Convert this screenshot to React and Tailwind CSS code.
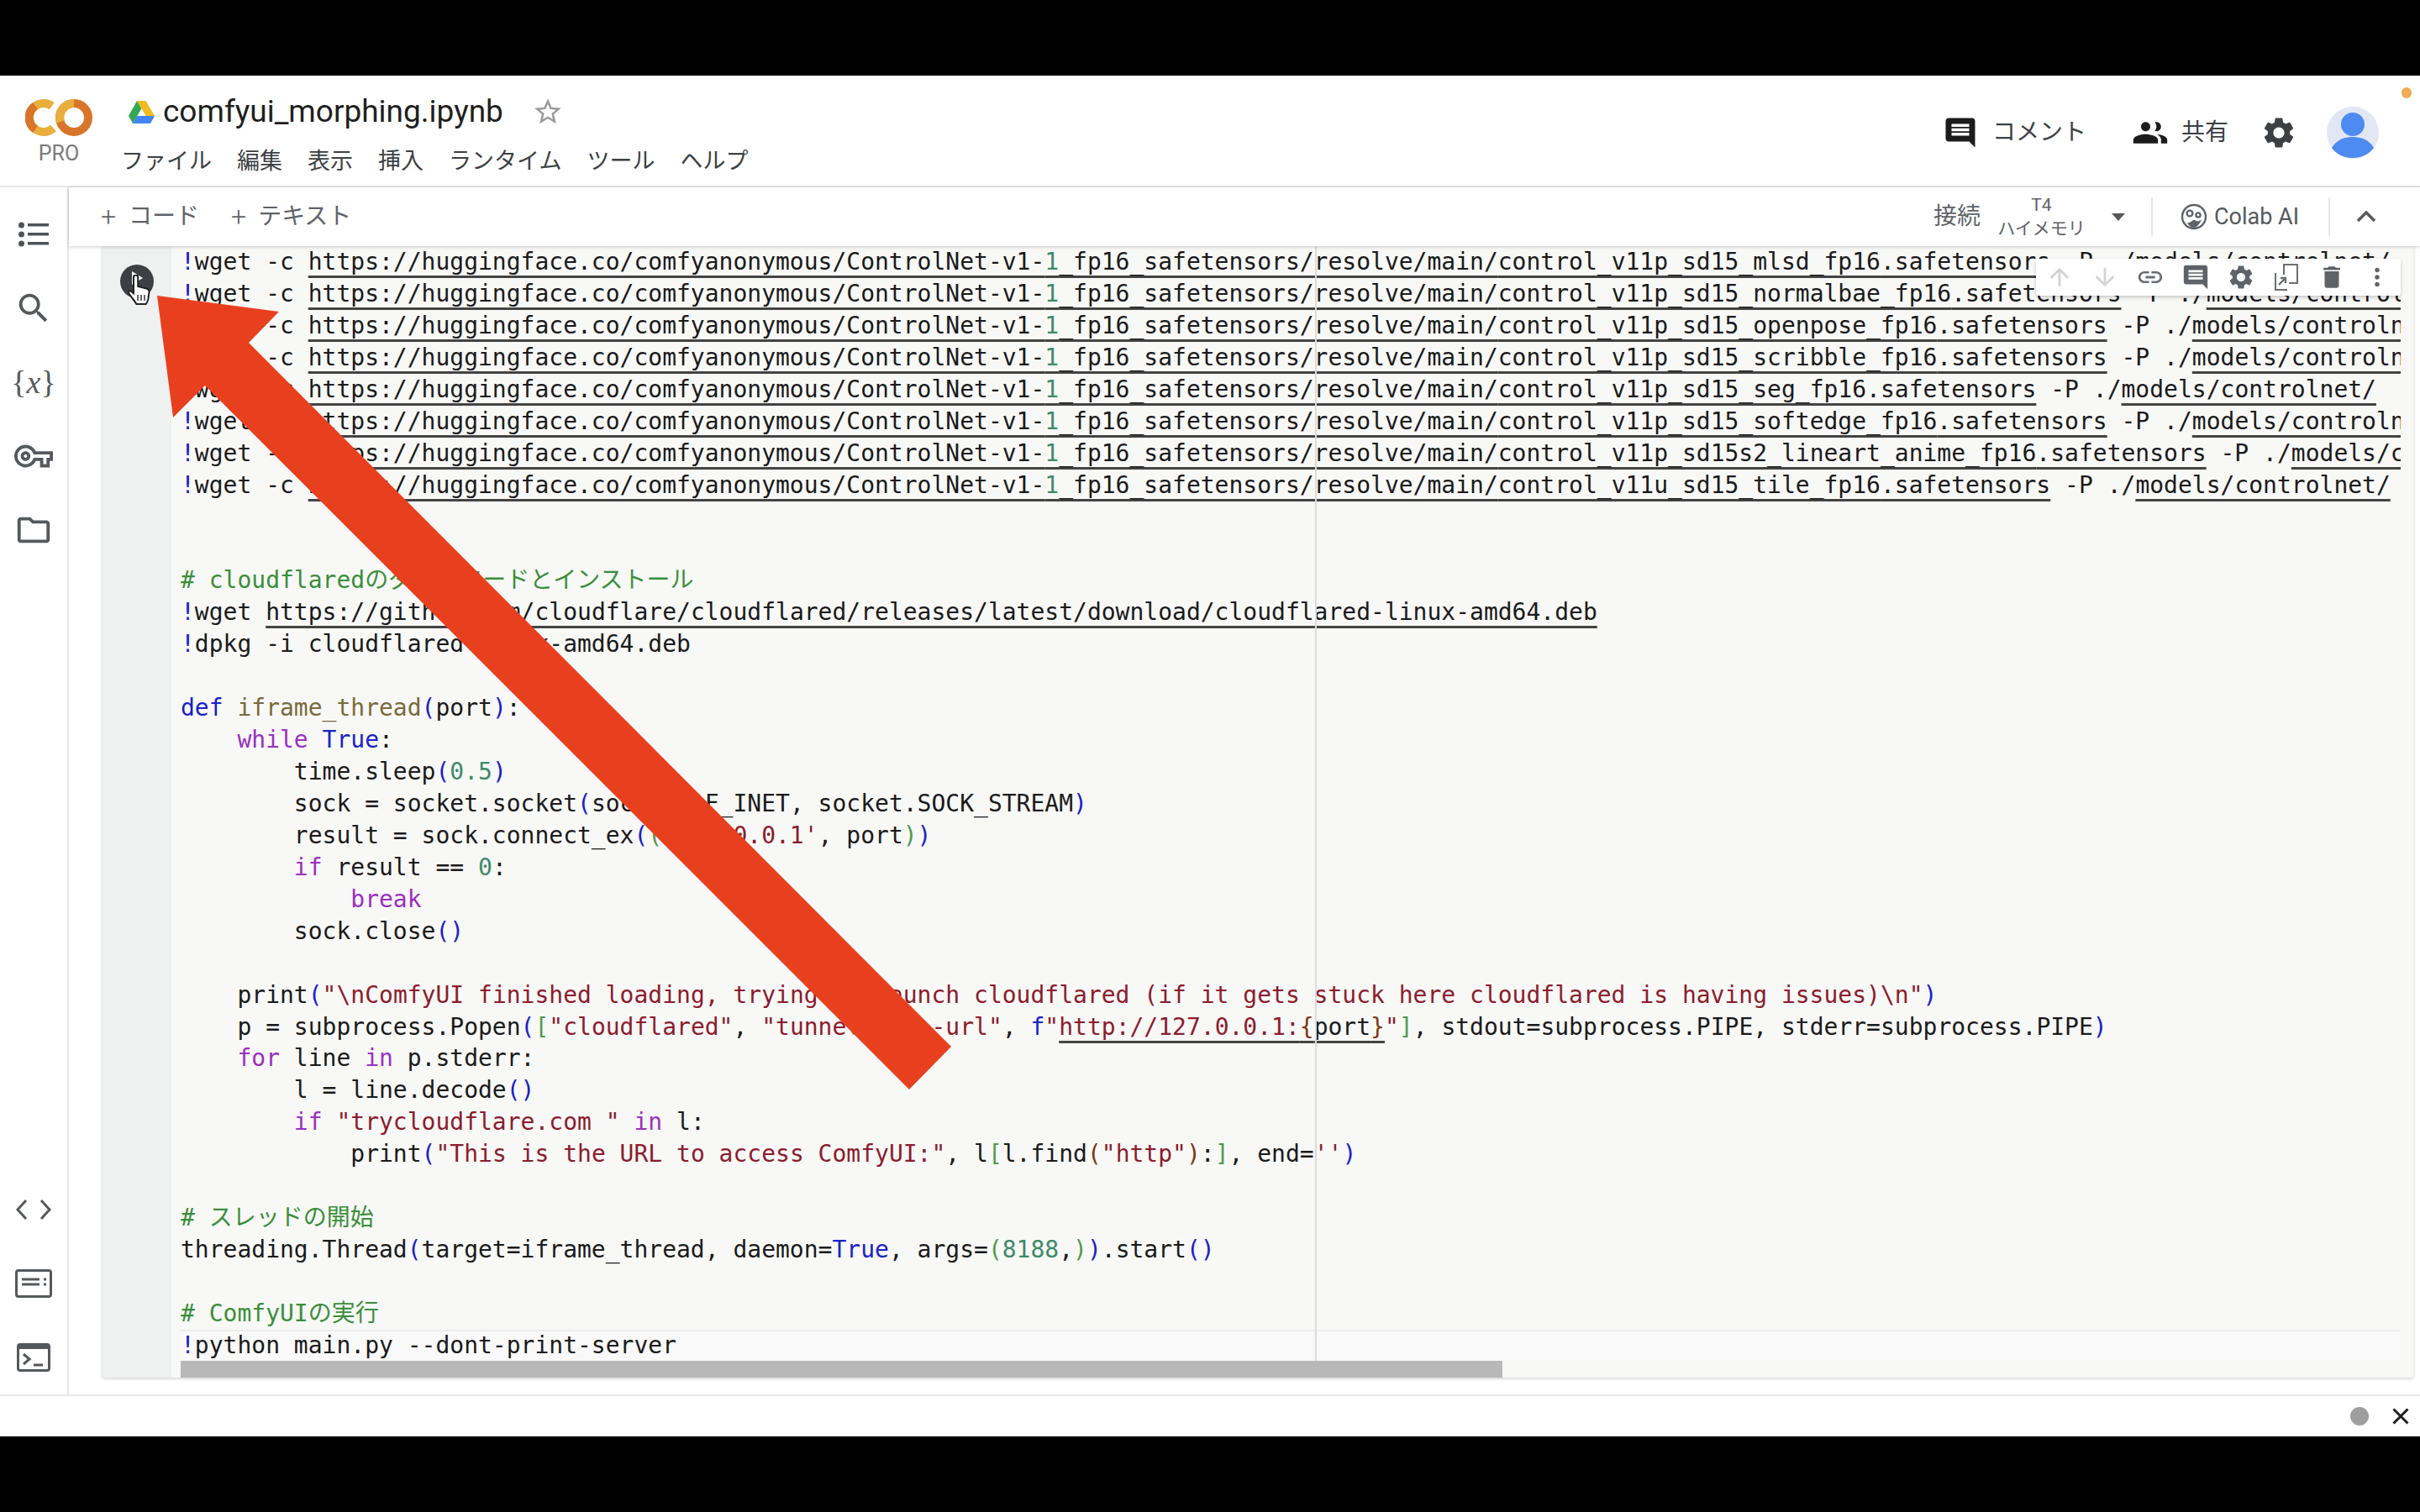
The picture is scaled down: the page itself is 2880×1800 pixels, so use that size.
import React from 'react';

const sans = "font-['Roboto','Noto_Sans_CJK_JP',sans-serif]";

// material style filled icon
function Mi({ d, size = 24, className = '' }) {
  return (
    <svg viewBox="0 0 24 24" width={size} height={size} fill="currentColor" className={className}>
      <path d={d} />
    </svg>
  );
}

const icons = {
  comment: 'M21.99 4c0-1.1-.89-2-1.99-2H4c-1.1 0-2 .9-2 2v12c0 1.1.9 2 2 2h14l4 4-.01-18zM18 14H6v-2h12v2zm0-3H6V9h12v2zm0-3H6V6h12v2z',
  people: 'M16 11c1.66 0 2.99-1.34 2.99-3S17.66 5 16 5c-.4 0-.8.08-1.15.22C15.57 5.95 16 6.93 16 8s-.43 2.05-1.15 2.78c.35.14.75.22 1.15.22zM9 11c1.66 0 3-1.34 3-3S10.66 5 9 5 6 6.34 6 8s1.34 3 3 3zm0 2c-2.33 0-8 1.17-8 3.5V19h16v-2.5C17 14.17 11.33 13 9 13zm7.5.1c1.5 1 2.5 2 2.5 3.4V19h4v-2.5c0-2.1-3.8-3.2-6.5-3.4z',
  gear: 'M19.14 12.94c.04-.3.06-.61.06-.94 0-.32-.02-.64-.07-.94l2.03-1.58c.18-.14.23-.41.12-.61l-1.92-3.32c-.12-.22-.37-.29-.59-.22l-2.39.96c-.5-.38-1.03-.7-1.62-.94l-.36-2.54c-.04-.24-.24-.41-.48-.41h-3.84c-.24 0-.43.17-.47.41l-.36 2.54c-.59.24-1.13.57-1.62.94l-2.39-.96c-.22-.08-.47 0-.59.22L2.74 8.87c-.12.21-.08.47.12.61l2.03 1.58c-.05.3-.09.63-.09.94s.02.64.07.94l-2.03 1.58c-.18.14-.23.41-.12.61l1.92 3.32c.12.22.37.29.59.22l2.39-.96c.5.38 1.03.7 1.62.94l.36 2.54c.05.24.24.41.48.41h3.84c.24 0 .44-.17.47-.41l.36-2.54c.59-.24 1.13-.56 1.62-.94l2.39.96c.22.08.47 0 .59-.22l1.92-3.32c.12-.22.07-.47-.12-.61l-2.01-1.58zM12 15.6c-1.98 0-3.6-1.62-3.6-3.6s1.62-3.6 3.6-3.6 3.6 1.62 3.6 3.6-1.62 3.6-3.6 3.6z',
  link: 'M3.9 12c0-1.71 1.39-3.1 3.1-3.1h4V7H7c-2.76 0-5 2.24-5 5s2.24 5 5 5h4v-1.9H7c-1.71 0-3.1-1.39-3.1-3.1zM8 13h8v-2H8v2zm9-6h-4v1.9h4c1.71 0 3.1 1.39 3.1 3.1s-1.39 3.1-3.1 3.1h-4V17h4c2.76 0 5-2.24 5-5s-2.24-5-5-5z',
  trash: 'M6 19c0 1.1.9 2 2 2h8c1.1 0 2-.9 2-2V7H6v12zM19 4h-3.5l-1-1h-5l-1 1H5v2h14V4z',
  dots: 'M12 8c1.1 0 2-.9 2-2s-.9-2-2-2-2 .9-2 2 .9 2 2 2zm0 2c-1.1 0-2 .9-2 2s.9 2 2 2 2-.9 2-2-.9-2-2-2zm0 6c-1.1 0-2 .9-2 2s.9 2 2 2 2-.9 2-2-.9-2-2-2z',
  up: 'M4 12l1.41 1.41L11 7.83V20h2V7.83l5.58 5.59L20 12l-8-8-8 8z',
  down: 'M20 12l-1.41-1.41L13 16.17V4h-2v12.17l-5.58-5.59L4 12l8 8 8-8z',
  star: 'M22 9.24l-7.19-.62L12 2 9.19 8.63 2 9.24l5.46 4.73L5.82 21 12 17.27 18.18 21l-1.63-7.03L22 9.24zM12 15.4l-3.76 2.27 1-4.28-3.32-2.88 4.38-.38L12 6.1l1.71 4.04 4.38.38-3.32 2.88 1 4.28L12 15.4z',
  search: 'M15.5 14h-.79l-.28-.27C15.41 12.59 16 11.11 16 9.5 16 5.91 13.09 3 9.5 3S3 5.91 3 9.5 5.91 16 9.5 16c1.61 0 3.09-.59 4.23-1.57l.27.28v.79l5 4.99L20.49 19l-4.99-5zm-6 0C7.01 14 5 11.99 5 9.5S7.01 5 9.5 5 14 7.01 14 9.5 11.99 14 9.5 14z',
  key: 'M22 19h-6v-4h-2.68c-1.14 2.42-3.6 4-6.32 4-3.86 0-7-3.14-7-7s3.14-7 7-7c2.72 0 5.17 1.58 6.32 4H24v6h-2v4zm-4-2h2v-4h2v-2H11.94l-.23-.67C11.01 8.34 9.11 7 7 7c-2.76 0-5 2.24-5 5s2.24 5 5 5c2.11 0 4.01-1.34 4.71-3.33l.23-.67H18v4zM7 15c-1.65 0-3-1.35-3-3s1.35-3 3-3 3 1.35 3 3-1.35 3-3 3zm0-4c-.55 0-1 .45-1 1s.45 1 1 1 1-.45 1-1-.45-1-1-1z',
  folder: 'M9.17 6l2 2H20v10H4V6h5.17M10 4H4c-1.1 0-1.99.9-1.99 2L2 18c0 1.1.9 2 2 2h16c1.1 0 2-.9 2-2V8c0-1.1-.9-2-2-2h-8l-2-2z',
};

function ColabLogo() {
  return (
    <svg width="80" height="48" viewBox="0 0 80 48">
      <circle cx="22" cy="24" r="17" fill="none" stroke="#e9ae3c" strokeWidth="10" strokeDasharray="76 31" strokeDashoffset="-14" />
      <path d="M12 10 A17 17 0 0 0 12 38" fill="none" stroke="#d9752b" strokeWidth="10" />
      <circle cx="58" cy="24" r="17" fill="none" stroke="#d9752b" strokeWidth="10" />
      <path d="M42 29 A17 17 0 0 1 58 7" fill="none" stroke="#e9ae3c" strokeWidth="10" />
    </svg>
  );
}

function DriveIcon() {
  return (
    <svg width="31" height="27" viewBox="0 0 31 27">
      <polygon points="10,0 15.5,9 5,27 0,18" fill="#34a853" />
      <polygon points="10,0 20.5,0 31,18 20.5,18" fill="#f2bb1d" />
      <polygon points="5,27 10,18 31,18 26,27" fill="#4285f4" />
    </svg>
  );
}

function Avatar() {
  return (
    <svg width="62" height="62" viewBox="0 0 62 62">
      <circle cx="31" cy="31" r="31" fill="#e3e7f5" />
      <circle cx="31" cy="21" r="14" fill="#4d8bf0" />
      <path d="M6 49 C12 39 21 36 31 36 C41 36 50 39 56 49 C50 57 41 61 31 61 C21 61 12 57 6 49Z" fill="#4d8bf0" />
    </svg>
  );
}

function ColabAiIcon() {
  return (
    <svg width="32" height="32" viewBox="0 0 32 32" fill="none" stroke="#5f6368" strokeWidth="2.4">
      <circle cx="16" cy="16" r="14" />
      <circle cx="11" cy="12" r="3.4" />
      <circle cx="21" cy="14" r="2.6" />
      <path d="M8 23c5 1 6-4 9-3s3 3 8-1c-2 6-6 10-9 10s-6-2-8-6z" fill="#5f6368" stroke="none" />
    </svg>
  );
}

function MirrorIcon() {
  return (
    <svg width="30" height="34" viewBox="0 0 30 34" fill="none" stroke="#6b6e72" strokeWidth="2">
      <path d="M12 14V2h16v22H18" />
      <path d="M2 12v20h14" />
      <path d="M6 26l8-8M8 18h6v6" strokeWidth="2.4" />
    </svg>
  );
}

function ListIcon() {
  return (
    <svg width="36" height="32" viewBox="0 0 36 32" fill="#4f5357">
      <circle cx="3.5" cy="5" r="3.5" />
      <circle cx="3.5" cy="16" r="3.5" />
      <circle cx="3.5" cy="27" r="3.5" />
      <rect x="11" y="3" width="25" height="3.5" />
      <rect x="11" y="14" width="25" height="3.5" />
      <rect x="11" y="25" width="25" height="3.5" />
    </svg>
  );
}

function CodeIcon() {
  return (
    <svg width="42" height="26" viewBox="0 0 42 26" fill="none" stroke="#55595d" strokeWidth="3">
      <path d="M12 2L2 13l10 11M30 2l10 11-10 11" />
    </svg>
  );
}

function SnippetIcon() {
  return (
    <svg width="44" height="34" viewBox="0 0 44 34" fill="none" stroke="#55595d" strokeWidth="3">
      <rect x="1.5" y="1.5" width="41" height="31" rx="2.5" />
      <path d="M8 12h21M8 18h21M8 24h0" />
      <path d="M34 12h3M34 18h3" />
    </svg>
  );
}

function TerminalIcon() {
  return (
    <svg width="40" height="34" viewBox="0 0 40 34" fill="none" stroke="#55595d" strokeWidth="3">
      <rect x="1.5" y="1.5" width="37" height="31" rx="2.5" />
      <rect x="1" y="1" width="38" height="6" fill="#55595d" stroke="none" />
      <path d="M8 13l7 6-7 6M20 26h11" />
    </svg>
  );
}

function HandCursor() {
  return (
    <svg width="30" height="38" viewBox="0 0 30 38" className="absolute left-[9px] top-[12px]">
      <path
        d="M7 3a2.6 2.6 0 0 1 5.2 0v11l10 2.4a4 4 0 0 1 3.3 4.4l-1.2 8.4q-.5 3-2.6 5.8H10.400q-2-3.400-5-7l-4-5.600q-1.500-3 1.600-3.200l4 3z"
        fill="#fff"
        stroke="#222"
        strokeWidth="2"
      />
      <path d="M12 24v7M16 24v7M20 24v7" stroke="#444" strokeWidth="1.600" />
    </svg>
  );
}

// syntax colours
const B = ({ children }) => <span className="text-[#1a22c8]">{children}</span>;
const P = ({ children }) => <span className="text-[#9a30c0]">{children}</span>;
const S = ({ children }) => <span className="text-[#8b1c2c]">{children}</span>;
const N = ({ children }) => <span className="text-[#3d8a68]">{children}</span>;
const C = ({ children }) => <span className="text-[#3a8f3a]">{children}</span>;
const F = ({ children }) => <span className="text-[#7a6a3a]">{children}</span>;
const G = ({ children }) => <span className="text-[#4f9a4f]">{children}</span>;
const Br = ({ children }) => <span className="text-[#7b3814]">{children}</span>;
const U = ({ children }) => (
  <span className="underline decoration-[2.5px] decoration-[#444] underline-offset-[7px] [text-decoration-skip-ink:none]">{children}</span>
);
const Bang = () => <span className="text-[#1a22c8]">!</span>;

const models = [
  'mlsd_fp16',
  'normalbae_fp16',
  'openpose_fp16',
  'scribble_fp16',
  'seg_fp16',
  'softedge_fp16',
];

const Row = ({ children }) => <div className="h-[37.94px]">{children}</div>;

function WgetLine({ name }) {
  return (
    <Row>
      <Bang />wget -c <U>https://huggingface.co/comfyanonymous/ControlNet-v1-<N>1</N>_fp16_safetensors/resolve/main/{name}.safetensors</U> -P ./<U>models/controlnet/</U>
    </Row>
  );
}

function CodeLines() {
  return (
    <>
      {models.map((m) => (
        <WgetLine key={m} name={`control_v11p_sd15_${m}`} />
      ))}
      <WgetLine name="control_v11p_sd15s2_lineart_anime_fp16" />
      <WgetLine name="control_v11u_sd15_tile_fp16" />
      <Row />
      <Row />
      <Row><C># cloudflaredのダウンロードとインストール</C></Row>
      <Row><Bang />wget <U>https://github.com/cloudflare/cloudflared/releases/latest/download/cloudflared-linux-amd64.deb</U></Row>
      <Row><Bang />dpkg -i cloudflared-linux-amd64.deb</Row>
      <Row />
      <Row><B>def</B> <F>iframe_thread</F><B>(</B>port<B>)</B>:</Row>
      <Row>{'    '}<P>while</P> <B>True</B>:</Row>
      <Row>{'        '}time.sleep<B>(</B><N>0.5</N><B>)</B></Row>
      <Row>{'        '}sock = socket.socket<B>(</B>socket.AF_INET, socket.SOCK_STREAM<B>)</B></Row>
      <Row>{'        '}result = sock.connect_ex<B>(</B><G>(</G><S>'127.0.0.1'</S>, port<G>)</G><B>)</B></Row>
      <Row>{'        '}<P>if</P> result == <N>0</N>:</Row>
      <Row>{'            '}<P>break</P></Row>
      <Row>{'        '}sock.close<B>()</B></Row>
      <Row />
      <Row>{'    '}print<B>(</B><S>"\nComfyUI finished loading, trying to launch cloudflared (if it gets stuck here cloudflared is having issues)\n"</S><B>)</B></Row>
      <Row>{'    '}p = subprocess.Popen<B>(</B><G>[</G><S>"cloudflared"</S>, <S>"tunnel"</S>, <S>"--url"</S>, <B>f</B><S>"<U>http://127.0.0.1:<Br>{'{'}</Br><span className="text-[#1a1a1a]">port</span><Br>{'}'}</Br></U>"</S><G>]</G>, stdout=subprocess.PIPE, stderr=subprocess.PIPE<B>)</B></Row>
      <Row>{'    '}<P>for</P> line <P>in</P> p.stderr:</Row>
      <Row>{'        '}l = line.decode<B>()</B></Row>
      <Row>{'        '}<P>if</P> <S>"trycloudflare.com "</S> <P>in</P> l:</Row>
      <Row>{'            '}print<B>(</B><S>"This is the URL to access ComfyUI:"</S>, l<G>[</G>l.find<Br>(</Br><S>"http"</S><Br>)</Br>:<G>]</G>, end=<S>''</S><B>)</B></Row>
      <Row />
      <Row><C># スレッドの開始</C></Row>
      <Row>threading.Thread<B>(</B>target=iframe_thread, daemon=<B>True</B>, args=<G>(</G><N>8188</N>,<G>)</G><B>)</B>.start<B>()</B></Row>
      <Row />
      <Row><C># ComfyUIの実行</C></Row>
      <div className="h-[37.94px] bg-[#f9f9f9] shadow-[inset_0_2px_0_#ececec]">
        <Bang />python main.py --dont-print-server
      </div>
    </>
  );
}

export default function App() {
  const cellTools = [
    { d: icons.up, cls: 'text-[#d4d4d4]' },
    { d: icons.down, cls: 'text-[#d4d4d4]' },
    { d: icons.link, cls: 'text-[#6b6e72]' },
    { d: icons.comment, cls: 'text-[#5f6368]' },
    { d: icons.gear, cls: 'text-[#5f6368]' },
    { mirror: true },
    { d: icons.trash, cls: 'text-[#5f6368]' },
    { d: icons.dots, cls: 'text-[#5f6368]' },
  ];

  return (
    <div className={`relative w-[2880px] h-[1800px] bg-black flex flex-col overflow-hidden ${sans}`}>
      <div className="h-[90px] shrink-0 bg-black" />

      {/* header */}
      <header className="relative h-[133px] shrink-0 bg-white border-b-2 border-[#e4e4e4] flex">
        <div className="w-[144px] shrink-0 pl-[30px] pt-[26px] flex flex-col">
          <ColabLogo />
          <div className="w-[80px] mt-[4px] text-center text-[25px] leading-[30px] text-[#7a7a7a]">PRO</div>
        </div>
        <div className="flex flex-col pt-[20px]">
          <div className="flex items-center h-[46px] pl-[9px]">
            <DriveIcon />
            <span className="ml-[10px] text-[37px] leading-[46px] text-[#1f1f1f]">comfyui_morphing.ipynb</span>
            <Mi d={icons.star} size={38} className="ml-[34px] text-[#9a9a9a]" />
          </div>
          <nav className="flex gap-[30px] mt-[17px] text-[27px] leading-[38px] text-[#3c4043]">
            <span>ファイル</span>
            <span>編集</span>
            <span>表示</span>
            <span>挿入</span>
            <span>ランタイム</span>
            <span>ツール</span>
            <span>ヘルプ</span>
          </nav>
        </div>
        <div className="ml-auto flex items-start pt-[37px] pr-[49px]">
          <div className="flex items-center h-[62px] text-[28px] text-[#3c4043]">
            <Mi d={icons.comment} size={42} className="text-[#1c1c1c]" />
            <span className="ml-[17px]">コメント</span>
            <Mi d={icons.people} size={44} className="ml-[54px] text-[#1c1c1c]" />
            <span className="ml-[15px]">共有</span>
            <Mi d={icons.gear} size={44} className="ml-[38px] text-[#3c4043]" />
            <div className="ml-[35px]"><Avatar /></div>
          </div>
        </div>
        <div className="absolute left-[2858px] top-[14px] w-[12px] h-[13px] rounded-full bg-[#f0ab55]" />
      </header>

      {/* main */}
      <div className="flex-1 min-h-0 flex bg-white">
        <aside className="w-[82px] shrink-0 border-r-2 border-[#e6e6e6] flex flex-col justify-between pt-[12px] text-[#55595d]">
          <div className="flex flex-col">
            <div className="h-[88px] flex items-center justify-center"><ListIcon /></div>
            <div className="h-[88px] flex items-center justify-center"><Mi d={icons.search} size={46} /></div>
            <div className="h-[88px] flex items-center justify-center font-['Liberation_Serif',serif] text-[38px]">{'{'}<span className="italic">x</span>{'}'}</div>
            <div className="h-[88px] flex items-center justify-center"><Mi d={icons.key} size={46} /></div>
            <div className="h-[88px] flex items-center justify-center"><Mi d={icons.folder} size={46} /></div>
          </div>
          <div className="flex flex-col">
            <div className="h-[88px] flex items-center justify-center"><CodeIcon /></div>
            <div className="h-[88px] flex items-center justify-center"><SnippetIcon /></div>
            <div className="h-[88px] flex items-center justify-center"><TerminalIcon /></div>
          </div>
        </aside>

        <div className="flex-1 min-w-0 flex flex-col">
          {/* toolbar */}
          <div className="relative z-10 h-[70px] shrink-0 bg-white shadow-[0_1px_4px_rgba(0,0,0,0.2)] flex items-center text-[#5f6368] text-[28px]">
            <span className="ml-[38px] text-[32px] font-light">+</span>
            <span className="ml-[15px]">コード</span>
            <span className="ml-[38px] text-[32px] font-light">+</span>
            <span className="ml-[14px]">テキスト</span>
            <div className="ml-auto flex items-center h-full">
              <span>接続</span>
              <div className="ml-[20px] w-[105px] flex flex-col items-center whitespace-nowrap text-[21px] leading-[28px]">
                <span>T4</span>
                <span>ハイメモリ</span>
              </div>
              <div className="ml-[31px] w-0 h-0 border-x-[8px] border-x-transparent border-t-[9px] border-t-[#55595d]" />
              <div className="ml-[31px] w-[2px] h-[46px] bg-[#e6e6e6]" />
              <div className="ml-[33px]"><ColabAiIcon /></div>
              <span className="ml-[8px] text-[#55595d] text-[27px]">Colab AI</span>
              <div className="ml-[35px] w-[2px] h-[46px] bg-[#e6e6e6]" />
              <svg width="24" height="14" viewBox="0 0 24 14" fill="none" stroke="#55595d" strokeWidth="3.500" className="ml-[31px] mr-[52px]">
                <path d="M2 12L12 2l10 10" />
              </svg>
            </div>
          </div>

          {/* cell */}
          <div className="flex-1 min-h-0 pl-[40px] pr-[8px] pb-[20px]">
            <div className="relative h-full bg-[#f8f8f7] shadow-[0_1px_4px_rgba(0,0,0,0.22)] flex">
              <div className="w-[82px] shrink-0 bg-[#eff0f0] flex justify-center pt-[22px]">
                <div className="relative w-[40px] h-[40px] rounded-full bg-[#3c4043] flex items-center justify-center">
                  <div className="w-0 h-0 border-y-[8px] border-y-transparent border-l-[13px] border-l-white -mt-[8px]" />
                  <HandCursor />
                </div>
              </div>
              <div className="relative flex-1 min-w-0 flex flex-col pl-[11px]">
                <div className="relative flex-1 min-h-0 overflow-hidden mr-[15px]">
                  <div className="whitespace-pre text-[28px] leading-[37.94px] text-[#1a1a1a] font-['DejaVu_Sans_Mono','Noto_Sans_CJK_JP',monospace]">
                    <CodeLines />
                  </div>
                  <div className="absolute left-[1350px] top-0 bottom-0 w-[2px] bg-[#dcdcdc]" />
                </div>
                <div className="h-[20px] shrink-0">
                  <div className="w-[1573px] h-full bg-[#b8b8b8]" />
                </div>
              </div>

              {/* cell actions */}
              <div className="absolute right-[15px] top-[15px] w-[434px] h-[44px] bg-white rounded-[3px] shadow-[0_2px_4px_rgba(0,0,0,0.2)] flex items-center px-[1px]">
                {cellTools.map((t, i) => (
                  <div key={i} className="w-[54px] flex justify-center">
                    {t.mirror ? <MirrorIcon /> : <Mi d={t.d} size={34} className={t.cls} />}
                  </div>
                ))}
              </div>
            </div>
          </div>
        </div>
      </div>

      {/* status bar */}
      <div className="h-[50px] shrink-0 bg-white border-t-2 border-[#e6e6e6] flex items-center justify-end pr-[13px]">
        <div className="w-[22px] h-[22px] rounded-full bg-[#9e9e9e]" />
        <svg width="20" height="20" viewBox="0 0 20 20" stroke="#1c1c1c" strokeWidth="3" className="ml-[28px]">
          <path d="M1.500 1.500l17 17M18.500 1.500l-17 17" />
        </svg>
      </div>
      <div className="h-[90px] shrink-0 bg-black" />

      {/* red arrow annotation */}
      <svg width="2880" height="1800" className="absolute inset-0 pointer-events-none">
        <polygon points="187,352 332,371 296,408 1132,1246 1082,1297 244,459 206,497" fill="#e8401f" />
      </svg>
    </div>
  );
}
